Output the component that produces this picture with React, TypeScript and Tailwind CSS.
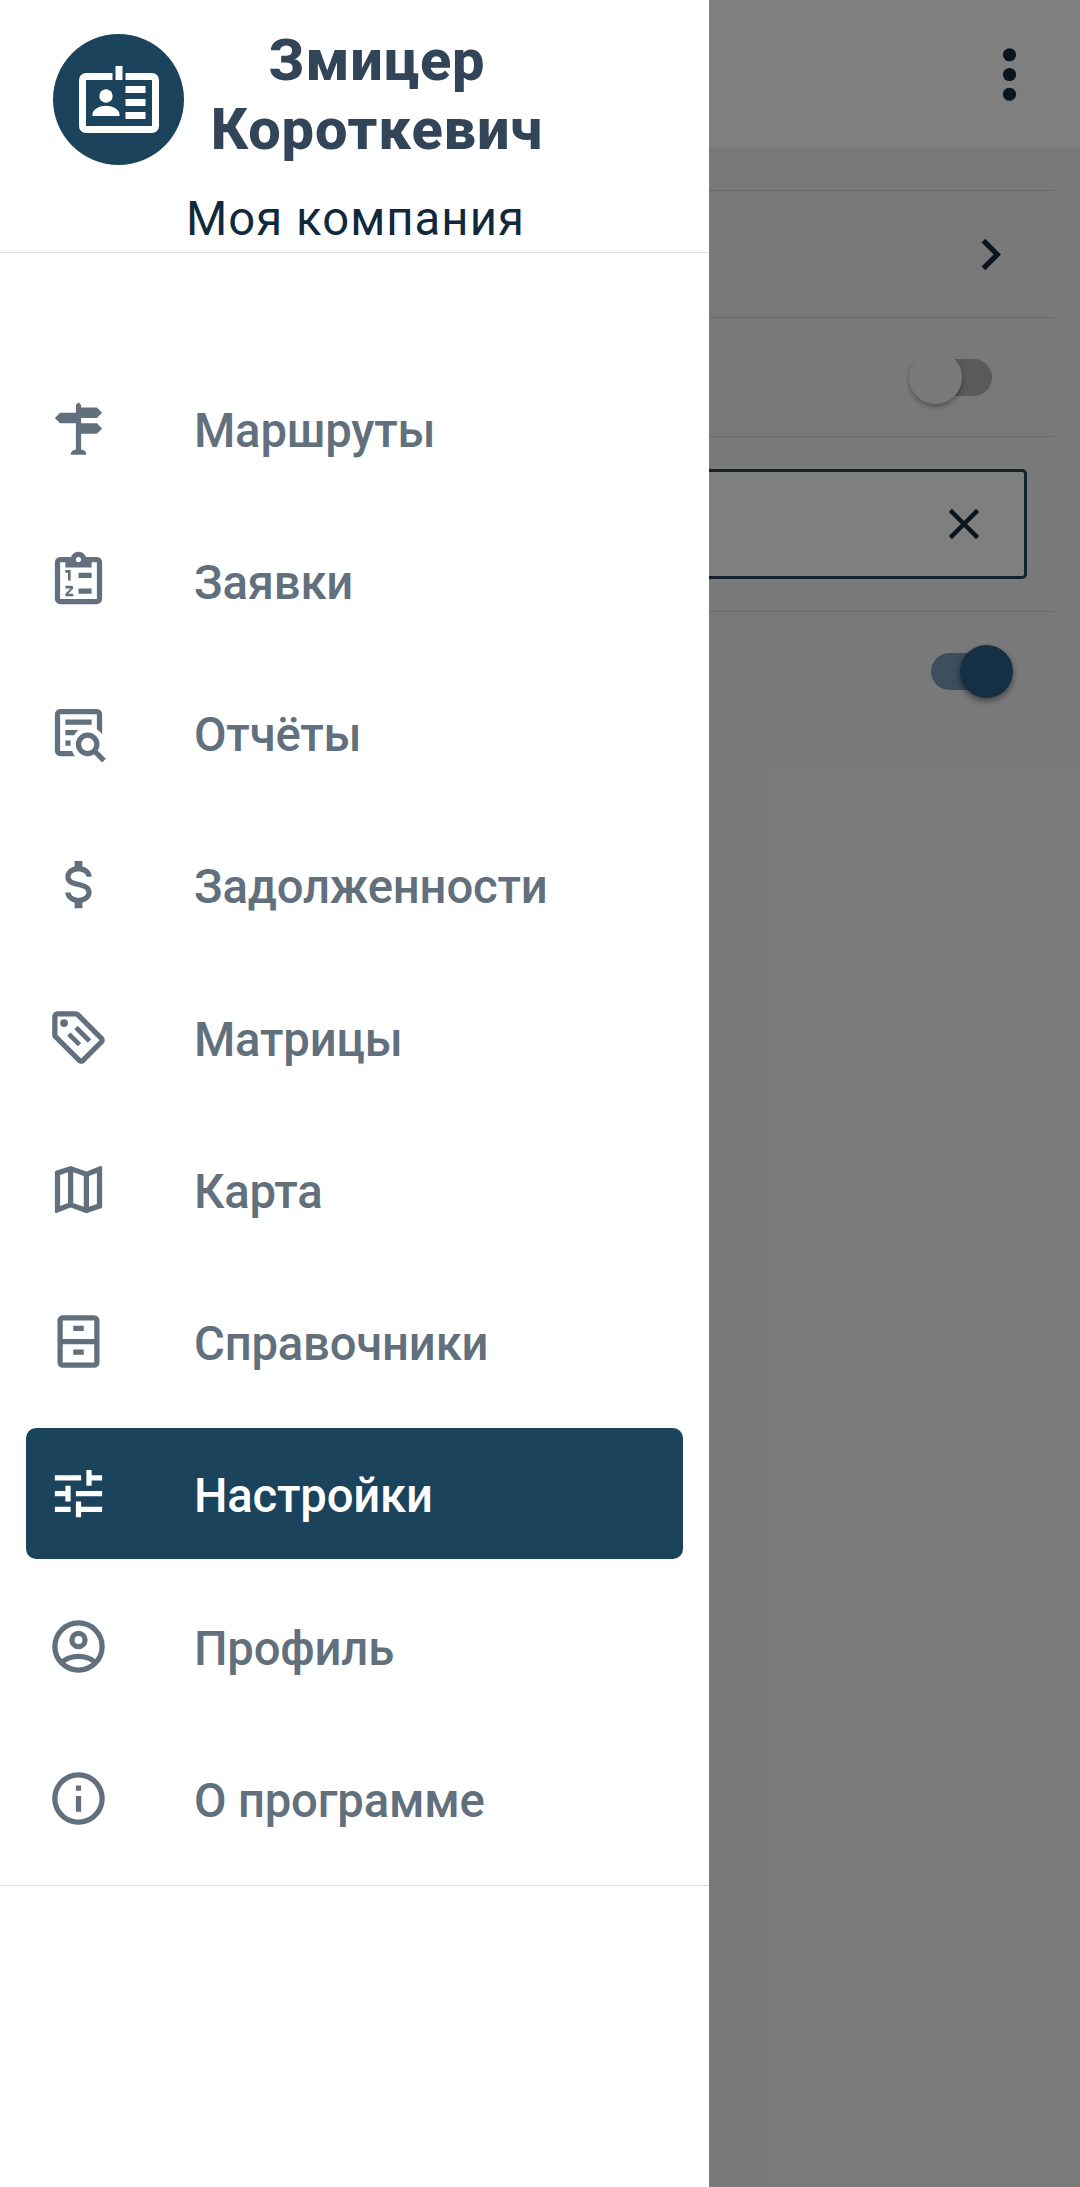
import type { ReactNode } from "react";

type IconProps = { children: ReactNode; className?: string };

function Icon({ children, className = "size-[63px]" }: IconProps) {
  return (
    <svg viewBox="0 0 24 24" fill="currentColor" className={`${className} shrink-0`}>
      {children}
    </svg>
  );
}

const items: { label: string; icon: ReactNode; active?: boolean }[] = [
  {
    label: "Маршруты",
    icon: <path d="M11 10H5L3 8l2-2h6V3l1-1 1 1v1h6l2 2-2 2h-6v2h6l2 2-2 2h-6v6a2 2 0 0 1 2 2H9a2 2 0 0 1 2-2z" />,
  },
  {
    label: "Заявки",
    icon: (
      <>
        <path
          fillRule="evenodd"
          d="M19 3h-4.18C14.4 1.84 13.3 1 12 1s-2.4.84-2.82 2H5a2 2 0 0 0-2 2v14a2 2 0 0 0 2 2h14a2 2 0 0 0 2-2V5a2 2 0 0 0-2-2zm-7 0a1 1 0 1 1 0 2 1 1 0 0 1 0-2zM5 5h2v2h10V5h2v14H5z"
        />
        <path d="M17 11h-5V9h5zm0 6h-5v-2h5zM8 12V9H7V8h2v4zm1.25 2c.41 0 .75.34.75.75 0 .2-.08.39-.21.52L8.12 17H10v1H7v-.92L9 15H7v-1z" />
      </>
    ),
  },
  {
    label: "Отчёты",
    icon: (
      <>
        <path d="M5 3a2 2 0 0 0-2 2v14a2 2 0 0 0 2 2h5.6a6.6 6.6 0 0 1-1-2H5V5h14v5.8c.78.5 1.45 1.16 2 1.9V5a2 2 0 0 0-2-2z" />
        <path d="M7 7h10v2H7zM7 11h5a6.5 6.5 0 0 0-1.7 2H7zM7 15h2v2H7z" />
        <path
          fillRule="evenodd"
          d="M15.5 12a4.5 4.5 0 1 1 0 9 4.5 4.5 0 0 1 0-9zm0 2a2.5 2.5 0 1 0 0 5 2.5 2.5 0 0 0 0-5z"
        />
        <path d="m19.3 18.9 3.1 3.1-1.4 1.4-3.1-3.1z" />
      </>
    ),
  },
  {
    label: "Задолженности",
    icon: <path d="M7 15h2c0 1.08 1.37 2 3 2s3-.92 3-2c0-1.1-1.04-1.5-3.24-2.03C9.64 12.44 7 11.78 7 9c0-1.79 1.47-3.31 3.5-3.82V3h3v2.18C15.53 5.69 17 7.21 17 9h-2c0-1.08-1.37-2-3-2s-3 .92-3 2c0 1.1 1.04 1.5 3.24 2.03C14.36 11.56 17 12.22 17 15c0 1.79-1.47 3.31-3.5 3.82V21h-3v-2.18C8.47 18.31 7 16.79 7 15z" />,
  },
  {
    label: "Матрицы",
    icon: (
      <>
        <path
          fillRule="evenodd"
          d="m21.41 11.58-9-9A2 2 0 0 0 11 2H4a2 2 0 0 0-2 2v7c0 .55.22 1.05.59 1.42l9 9c.36.36.86.58 1.41.58s1.05-.22 1.41-.59l7-7c.37-.36.59-.86.59-1.41s-.23-1.06-.59-1.42zM13 20.01 4 11V4h7l9 9z"
        />
        <circle cx="6.5" cy="6.5" r="1.5" />
        <path d="m11.7 7.55 5.15 5.15-1.3 1.3-5.15-5.15zM8.95 10.05l4.05 4.05-1.25 1.25L7.7 11.3z" />
      </>
    ),
  },
  {
    label: "Карта",
    icon: <path fillRule="evenodd" d="m20.5 3-.16.03L15 5.1 9 3 3.36 4.9c-.21.07-.36.25-.36.48V20.5c0 .28.22.5.5.5l.16-.03L9 18.9l6 2.1 5.64-1.9c.21-.07.36-.25.36-.48V3.5c0-.28-.22-.5-.5-.5zM10 5.47l4 1.4v11.66l-4-1.4zm-5 .99 3-1.01v11.7l-3 1.16zm14 11.08-3 1.01V6.86l3-1.16z" />,
  },
  {
    label: "Справочники",
    icon: (
      <>
        <path fillRule="evenodd" d="M6 2h12a2 2 0 0 1 2 2v16a2 2 0 0 1-2 2H6a2 2 0 0 1-2-2V4c0-1.1.9-2 2-2zm0 2v7h12V4zm0 9v7h12v-7z" />
        <path d="M10 6h4v2h-4zM10 15h4v2h-4z" />
      </>
    ),
  },
  {
    label: "Настройки",
    active: true,
    icon: <path d="M3 17v2h6v-2zM3 5v2h10V5zm10 16v-2h8v-2h-8v-2h-2v6zM7 9v2H3v2h4v2h2V9zm14 4v-2H11v2zm-6-4h2V7h4V5h-4V3h-2z" />,
  },
  {
    label: "Профиль",
    icon: (
      <g fill="none" stroke="currentColor" strokeWidth="2">
        <circle cx="12" cy="12" r="9" />
        <circle cx="12" cy="9.5" r="2.5" />
        <path d="M5.4 18.1a10.6 10.6 0 0 1 13.2 0" />
      </g>
    ),
  },
  {
    label: "О программе",
    icon: <path d="M11 7h2v2h-2zm0 4h2v6h-2zm1-9C6.48 2 2 6.48 2 12s4.48 10 10 10 10-4.48 10-10S17.52 2 12 2zm0 18c-4.41 0-8-3.59-8-8s3.59-8 8-8 8 3.59 8 8-3.59 8-8 8z" />,
  },
];

function Screen() {
  return (
    <div className="flex h-full w-full flex-col bg-[#f3f3f3] text-[#142a3b]">
      <header className="flex h-[148px] shrink-0 items-center justify-end bg-white pr-[31px] shadow-[0_2px_6px_rgba(0,0,0,0.04)]">
        <Icon className="size-[79px]">
          <circle cx="12" cy="6" r="2" />
          <circle cx="12" cy="12" r="2" />
          <circle cx="12" cy="18" r="2" />
        </Icon>
      </header>
      <main className="mt-[42px] mr-[26px] flex flex-col">
        <div className="flex h-[127px] items-center justify-end border-t border-[#d6d6d6] pr-[32px]">
          <Icon>
            <path d="M8.59 16.59 13.17 12 8.59 7.41 10 6l6 6-6 6z" />
          </Icon>
        </div>
        <div className="flex h-[119px] items-center justify-end border-t border-[#d6d6d6] pr-[62px]">
          <div className="flex h-[37px] w-[73px] items-center rounded-full bg-[#b4b4b4]">
            <div className="-ml-[10px] size-[53px] shrink-0 rounded-full bg-[#f3f3f3] shadow-[0_3px_5px_rgba(0,0,0,0.3)]" />
          </div>
        </div>
        <div className="flex h-[175px] items-center justify-end border-t border-[#d6d6d6] pr-[27px]">
          <div className="flex h-[110px] w-full items-center justify-end rounded-[5px] border-[3px] border-[#24465c] bg-white pr-[34px]">
            <Icon className="size-[52px]">
              <path d="M19 6.41 17.59 5 12 10.59 6.41 5 5 6.41 10.59 12 5 17.59 6.41 19 12 13.41 17.59 19 19 17.59 13.41 12z" />
            </Icon>
          </div>
        </div>
        <div className="flex h-[120px] items-center justify-end border-t border-[#d6d6d6] pr-[50px]">
          <div className="flex h-[37px] w-[73px] items-center justify-end rounded-full bg-[#7a9db8]">
            <div className="-mr-[9px] size-[53px] shrink-0 rounded-full bg-[#2a5e8a] shadow-[0_3px_6px_rgba(0,0,0,0.45)]" />
          </div>
        </div>
      </main>
    </div>
  );
}

function Drawer() {
  return (
    <aside className="absolute inset-y-0 left-0 flex w-[709px] flex-col bg-white">
      <div className="flex h-[253px] shrink-0 flex-col border-b border-[#dedede] pt-[26px]">
        <div className="flex pl-[53px]">
          <div className="mt-[8px] flex size-[131px] items-center justify-center rounded-full bg-[#1b435b] text-white">
            <svg viewBox="0 0 80 67" fill="currentColor" className="h-[67px] w-[80px]">
              <path d="M7 7h26.500v7H7v46h66V14H46.500V7H73a7 7 0 0 1 7 7v46a7 7 0 0 1-7 7H7a7 7 0 0 1-7-7V14a7 7 0 0 1 7-7z" />
              <path d="M36.500 0h7v14h-7zM46.500 20h20v7h-20zM46.500 33h20v7h-20zM46.500 46h20v7h-20zM13.500 50v-2c0-5 8-8.300 13.500-8.300s13.500 3.300 13.500 8.300v2z" />
              <circle cx="27" cy="30" r="6.700" />
            </svg>
          </div>
          <h1 className="ml-[22px] w-[342px] text-center text-[57.75px] leading-[69px] font-extrabold tracking-[0.85px] text-[#324558]">
            Змицер Короткевич
          </h1>
        </div>
        <p className="mt-[26px] pl-[2px] text-center text-[47.25px] leading-[56px] tracking-[1.05px] text-[#10293d]">
          Моя компания
        </p>
      </div>
      <nav className="flex shrink-0 flex-col gap-[21.25px] border-b border-[#dedede] px-[26px] pt-[109px] pb-[22px]">
        {items.map(({ label, icon, active }) => (
          <a
            key={label}
            className={`flex h-[131px] items-center rounded-[10px] pt-[1px] pl-[21px] ${
              active ? "bg-[#1b435b] text-white" : "text-[#61707c]"
            }`}
          >
            <Icon>{icon}</Icon>
            <span className="ml-[84px] pt-[5px] text-[47.25px] leading-[56px] font-medium tracking-[-0.2px] whitespace-nowrap">
              {label}
            </span>
          </a>
        ))}
      </nav>
    </aside>
  );
}

export default function App() {
  return (
    <div className="relative h-[2187px] w-[1080px] overflow-hidden font-['Roboto',sans-serif]">
      <Screen />
      <div className="absolute inset-0 bg-black/50" />
      <Drawer />
    </div>
  );
}
